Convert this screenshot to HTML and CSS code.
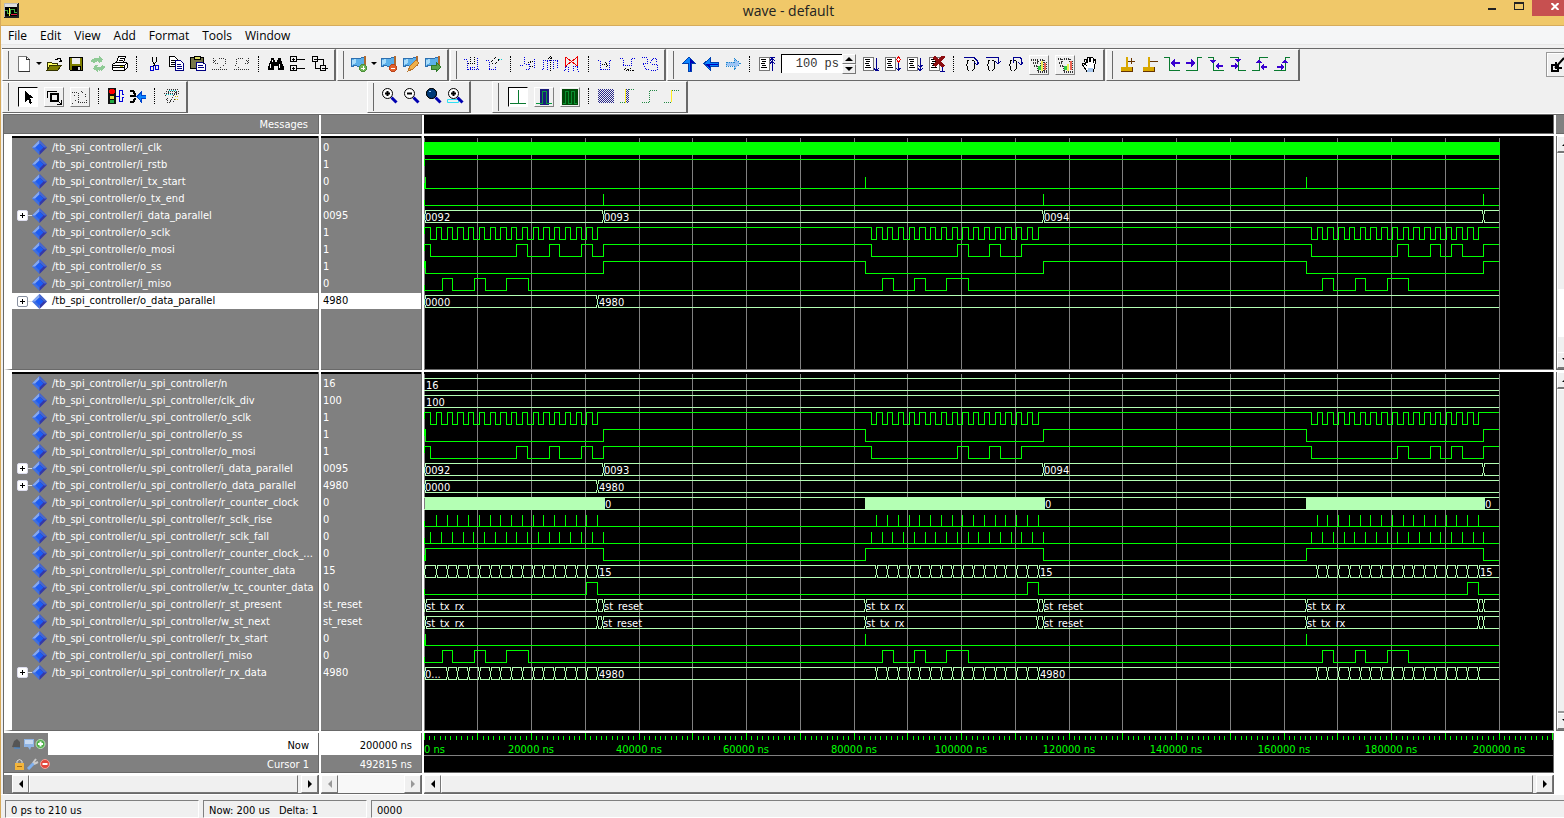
FILE: index.html
```html
<!DOCTYPE html>
<html lang="en">
<head>
<meta charset="utf-8">
<title>wave - default</title>
<link rel="stylesheet" href="styles.css">
</head>
<body>
<svg class="defs" aria-hidden="true">
  <defs>
    <symbol id="flag" viewBox="0 0 16 16"><path d="M0 3l5-1 2 1 6-2v9l-6 1-2-2-5 2z" fill="#5bb0ea" stroke="#2d6fb0"/><path d="M1 4l4-1v4l-4 2z" fill="#a9dcfa" stroke="none"/><path d="M13.500 0v10" stroke="#b06a30" stroke-width="2"/></symbol>
    <symbol id="list" viewBox="0 0 16 16"><path d="M.5 1.500h10v13H.5z" fill="#fff" stroke="#777"/><path d="M2 3.500h5M3 5.500h4M2 7.500h4M3 9.500h4M2 11.500h6" stroke="#000"/></symbol>
    <symbol id="gem" viewBox="0 0 15 15"><path d="M7.500 0L0 7.500 7.500 15z" fill="#3f6fe0"/><path d="M7.500 0L15 7.500 7.500 15z" fill="#3438a8"/><path d="M7.500 0L0 7.500h3l4.500-4z" fill="#86a8f0"/><path d="M7.500 0L15 7.500h-3l-4.500-4z" fill="#4668d0"/><path d="M7.500 3.500l4 4-4 4-4-4z" fill="#1c5cf4"/></symbol>
    <symbol id="lens" viewBox="0 0 17 17"><circle cx="6.500" cy="6.500" r="5" fill="#fff" stroke="#000"/><path d="M10.500 10.500l5 5" stroke="#0000b0" stroke-width="3"/></symbol>
  </defs>
</svg>

<header class="titlebar">
  <svg class="app-icon" viewBox="0 0 15 15"><path d="M0 0h15v15H0z" fill="#222"/><path d="M1 1h12v12H1z" fill="#000"/><path d="M1 1h12v3H1z" fill="#ddd"/><path d="M1 7.500h2v3h3v-4h4v3h3" fill="none" stroke="#4a4"/><path d="M5.500 5v8" stroke="#ee4"/><path d="M7 11.500h6" stroke="#e02040"/><path d="M0 0v14M0 .5h14" stroke="#bbb"/></svg>
  <h1>wave - default</h1>
  <div class="win-buttons">
    <button class="win min" aria-label="Minimize"><span></span></button>
    <button class="win max" aria-label="Maximize"><span></span></button>
    <button class="win close" aria-label="Close"><svg viewBox="0 0 8 7"><path d="M.5 0l7 7M7.500 0l-7 7" stroke="#fff" stroke-width="2"/></svg></button>
  </div>
</header>

<nav class="menubar">
  <button>File</button><button>Edit</button><button>View</button><button>Add</button><button>Format</button><button>Tools</button><button>Window</button>
</nav>

<div class="toolbars">
  <div class="bar-row">
    <div class="group">
      <button class="tb" aria-label="New"><svg viewBox="0 0 16 16"><path d="M2.500.5h8l3 3v12h-11z" fill="#fff" stroke="#777"/><path d="M10.500.5v3h3M14 15.500H3" stroke="#333"/></svg></button>
      <button class="drop" aria-label="New options"></button>
      <button class="tb" aria-label="Open"><svg viewBox="0 0 16 16"><path d="M9 3.500h2l1-1h2l1 2v1M13 5.500h3" stroke="#000"/><path d="M1 14V6h4l1 1h5v3" fill="#ff6" stroke="#330"/><path d="M1 14l3-4.500h11l-3 4.500z" fill="#808000" stroke="#330"/></svg></button>
      <button class="tb" aria-label="Save"><svg viewBox="0 0 16 16"><path d="M1.500 1.500h13v13h-12l-1-1z" fill="#808000" stroke="#000"/><path d="M4 2h8v6H4z" fill="#efefef"/><path d="M4 10h9v4H4z" fill="#000"/><path d="M10 11h2v3h-2z" fill="#ddd"/></svg></button>
      <button class="tb" aria-label="Reload"><svg viewBox="0 0 16 16"><path d="M1 5l3-3h5V0l4 4-4 3V5H6L4 7zM15 11l-3 3H7v2l-4-4 4-3v2h3l2-2z" fill="#8fca95" stroke="#8fca95" stroke-dasharray="1 1"/></svg></button>
      <button class="tb" aria-label="Print"><svg viewBox="0 0 16 16"><path d="M4.500 7l2-6.500h7l-2 6.500" fill="#fff" stroke="#000"/><path d="M8 2.500h4M7 4.500h4" stroke="#000"/><path d="M.5 8.500l3-2h11l1 1v4l-3 3H2l-1.500-1z" fill="#fff" stroke="#000"/><path d="M1 9.500h11l3-2M1 11.500h11M12.500 9v5" stroke="#000"/><path d="M8 10.500h3" stroke="#cc0"/></svg></button>
      <i class="sep"></i>
      <button class="tb" aria-label="Cut"><svg viewBox="0 0 16 16"><path d="M6.500 1v4l3 6M10.500 1v4l-4 6" stroke="#000"/><path d="M4.500 10.500h3v4h-3zM9.500 9.500h3v4h-3z" stroke="#0000d0"/></svg></button>
      <button class="tb" aria-label="Copy"><svg viewBox="0 0 16 16"><path d="M1.500.5h5l3 3v7h-8z" fill="#fff" stroke="#000"/><path d="M3 4.500h4M3 6.500h4M3 8.500h4" stroke="#000"/><path d="M7.500 4.500h5l3 3v7h-8z" fill="#fff" stroke="#000080"/><path d="M9 8.500h4M9 10.500h5M9 12.500h5" stroke="#000080"/></svg></button>
      <button class="tb" aria-label="Paste"><svg viewBox="0 0 16 16"><path d="M.5 1.500h13v11H.5z" fill="#77774a" stroke="#000"/><path d="M4 .5h6v3H4z" fill="#dd6" stroke="#000"/><path d="M6.500 6.500h6l3 2v6h-9z" fill="#fff" stroke="#000080"/><path d="M8 9.500h5M8 11.500h6" stroke="#000080"/></svg></button>
      <button class="tb" aria-label="Undo"><svg class="dots" viewBox="0 0 16 16"><path d="M1.500 2v5h5M2 6l3-3M7 2.500h5M13.500 3v5M12 9.500h-2M9 11.500h-2M0 13.500h16"/></svg></button>
      <button class="tb" aria-label="Redo"><svg class="dots" viewBox="0 0 16 16"><path d="M14.500 2v5h-5M14 6l-3-3M9 2.500H4M2.500 3v5M1 9.500h2M4 11.500h2M0 13.500h16"/></svg></button>
      <i class="sep"></i>
      <button class="tb" aria-label="Find"><svg viewBox="0 0 16 16"><path d="M3 2h3v2h1v2h2V4h1V2h3v2l3 7v3h-6v-4H6v4H0v-3l3-7z" fill="#000"/><path d="M2.500 8v4M11.500 8v4M4.500 4v2" stroke="#fff"/></svg></button>
      <button class="tb" aria-label="Expand all"><svg viewBox="0 0 16 16"><path d="M.5.5h6v5h-6zM.5 9.500h6v5h-6zM2 3.500h3M3.500 2v3M2 12.500h3M3.500 11v3M7 3.500h8M7 12.500h8" stroke="#000"/></svg></button>
      <button class="tb" aria-label="Collapse all"><svg viewBox="0 0 16 16"><path d="M.5.500h5v5h-5zM8.500 9.500h5v5h-5zM2 3.500h3M10 12.500h3M6 3.500h5.500V9M3.500 6v6.500H8M14 12.500h2" stroke="#000"/></svg></button>
    </div>
    <div class="group">
      <button class="tb" aria-label="Add bookmark"><svg viewBox="0 0 16 16"><use href="#flag"/><circle cx="12" cy="12" r="3.500" fill="#6fb356" stroke="#4b8f38"/><path d="M10 12h4M12 10v4" stroke="#fff"/></svg></button>
      <button class="drop" aria-label="Bookmark options"></button>
      <button class="tb" aria-label="Delete bookmark"><svg viewBox="0 0 16 16"><use href="#flag"/><circle cx="12" cy="12" r="3.500" fill="#e2602c" stroke="#b9441c"/><path d="M10 12h4" stroke="#fff"/></svg></button>
      <button class="tb" aria-label="Edit bookmark"><svg viewBox="0 0 16 16"><use href="#flag"/><path d="M5 15l2-5 6-6 3 3-6 6z" fill="#efb04a" stroke="#b9752a"/></svg></button>
      <button class="tb" aria-label="Go to bookmark"><svg viewBox="0 0 16 16"><use href="#flag"/><path d="M6 9h5V6l5 5-5 5v-3H6z" fill="#58a44a" stroke="#2f7a2a"/></svg></button>
    </div>
    <div class="group">
      <button class="tb" aria-label="Insert pulse"><svg class="dots blue" viewBox="0 0 16 16"><path d="M0 3.500h3v10h13M13.500 2v11M6 13v-2h6"/><path class="k" d="M6.500 1v8M10.500 1v8M4 7.500h8"/></svg></button>
      <button class="tb" aria-label="Delete edge"><svg class="dots blue" viewBox="0 0 16 16"><path d="M0 4.500h3v9h6v-4"/><path class="k" d="M5 6l5-5 3 3-5 5z"/><path d="M13 3.500h3" stroke="#0cc"/></svg></button>
      <i class="sep"></i>
      <button class="tb" aria-label="Invert"><svg class="dots blue" viewBox="0 0 16 16"><path d="M4.500 1v7h5v5h-5M0 9.500h4M14.500 3v10"/><path class="k" d="M8 7l5-2M10 10h4"/></svg></button>
      <button class="tb" aria-label="Mirror"><svg class="dots blue" viewBox="0 0 16 16"><path d="M0 13.500h1v-9h4v9M11.500 13v-9h4v9M5 4.500h6"/><path class="k" d="M8.500 0v16M6 3l2-2 3 2"/></svg></button>
      <button class="tb" aria-label="Value"><svg viewBox="0 0 16 16"><path d="M1.500 1v9l12-9v9l-12-9" stroke="#e00"/><path d="M0 14.500h1v-4h3v5M9.500 15v-5h4v5h2" stroke="#00d" stroke-dasharray="1 1"/></svg></button>
      <i class="sep"></i>
      <button class="tb" aria-label="Stretch edge"><svg class="dots blue" viewBox="0 0 16 16"><path d="M0 4.500h2v9h9v-9h3"/><path class="k" d="M4 8.500h5M7 6l3 3-3 2"/></svg></button>
      <button class="tb" aria-label="Move edge"><svg class="dots blue" viewBox="0 0 16 16"><path d="M0 2.500h3v7h8v-7h4"/><path class="k" d="M4 14l2-2 2 2 3-2 2 2H5"/></svg></button>
      <button class="tb" aria-label="Extend waves"><svg class="dots blue" viewBox="0 0 16 16"><path d="M0 1.500h5v6H1l3 6h3M8 7l3-5h3v4M10 8h5v6h-6"/></svg></button>
    </div>
    <div class="group">
      <button class="tb" aria-label="Up"><svg viewBox="0 0 16 16"><path d="M8 1l6 6h-4v8H7V7H2z" fill="#0a84ff" stroke="#0040b0"/><path d="M8.500 2l5 5h-4v8h-1z" fill="#0000b8"/></svg></button>
      <button class="tb" aria-label="Back"><svg viewBox="0 0 16 16"><path d="M1 7.500L7 2v4h8v4H7v4z" fill="#0a84ff" stroke="#0040b0"/><path d="M2 8l5 5V9h8V8z" fill="#0000b8"/></svg></button>
      <button class="tb" aria-label="Forward"><svg class="dots" viewBox="0 0 16 16"><path d="M15 7.500L9 2v4H1v4h8v4z" fill="#9cc4f4" stroke="#28c"/></svg></button>
      <i class="sep"></i>
      <button class="tb" aria-label="Restart"><svg viewBox="0 0 16 16"><use href="#list"/><path d="M11 1.500h5M13.500 1v14M11 5l2-3 3 3M11 8l2-3 3 3" stroke="#000090"/></svg></button>
      <input class="run-length" type="text" value="100 ps" aria-label="Run length">
      <div class="spin"><button class="up" aria-label="Increase"></button><button class="down" aria-label="Decrease"></button></div>
      <button class="tb" aria-label="Run"><svg viewBox="0 0 16 16"><use href="#list"/><path d="M13.500 2v13M11 12l2 3 3-3M12 14.500h4" stroke="#000090"/></svg></button>
      <button class="tb" aria-label="Continue run"><svg viewBox="0 0 16 16"><use href="#list"/><path d="M13.500 6v9M11 12l2 2 3-2" stroke="#000090"/><path d="M13.500 1l2 2.500-2 2.500-2-2.500z" fill="#fff" stroke="#e00"/></svg></button>
      <button class="tb" aria-label="Run all"><svg viewBox="0 0 16 16"><use href="#list"/><path d="M13.500 2v13M11 9l2 2 3-2M11 12l2 3 3-3" stroke="#000090"/></svg></button>
      <button class="tb" aria-label="Break"><svg viewBox="0 0 16 16"><use href="#list"/><path d="M5 1l10 10M15 0L5 10" stroke="#8c0d10" stroke-width="3"/><path d="M11 15.500h5M13.500 11v4" stroke="#000090"/></svg></button>
      <i class="sep"></i>
      <button class="tb" aria-label="Step into"><svg viewBox="0 0 16 16"><path class="brace" d="M6 4H5L4 5v3L3 9l1 1v3l1 1h1M9 4h1l1 1v3l1 1-1 1v3l-1 1H9"/><path d="M1 1.500h10l3 3v4M11 6l3 3 2-3" stroke="#000090"/></svg></button>
      <button class="tb" aria-label="Step over"><svg viewBox="0 0 16 16"><path class="brace" d="M5 4H4L3 5v3L2 9l1 1v3l1 1h1M7 4h1l1 1v3l1 1-1 1v3l-1 1H7"/><path d="M1 1.500h12v6M10 5l3 3 3-3" stroke="#000090"/></svg></button>
      <button class="tb" aria-label="Step out"><svg viewBox="0 0 16 16"><path class="brace" d="M5 4H4L3 5v3L2 9l1 1v3l1 1h1M7 4h1l1 1v3l1 1-1 1v3l-1 1H7"/><path d="M6.500 7V2l2-1h4l2 2v5M11 6l3 3 2-3" stroke="#000090"/></svg></button>
      <button class="tb raised" aria-label="Profile on"><svg viewBox="0 0 16 16"><path d="M0 2.500h7v3H1M9 2.500h4v12M3 8.500h4v6h9M10 6v8M15.500 5v10" stroke="#333" stroke-width="2" stroke-dasharray="1 1"/><path d="M7 9h3v4H7z" fill="#3c4"/><path d="M10 4h2v10h-2z" fill="#ee5"/><path d="M13 6h2v7h-2z" fill="#e65"/></svg></button>
      <button class="tb raised" aria-label="Memory profile"><svg viewBox="0 0 16 16"><path d="M1 2h4v4H2M7 2h6v3M3 8.500h4v6h9M15.500 4v10" stroke="#333" stroke-width="2" stroke-dasharray="1 1"/><path d="M7 9h3v4H7z" fill="#3c4"/><path d="M10 7h2v7h-2z" fill="#ee5"/><path d="M13 4h2v9h-2z" fill="#e65"/></svg></button>
      <button class="tb" aria-label="Pan"><svg viewBox="0 0 16 16"><path d="M5 14l-4-6 1-1 3 2-2-6 2 0 1 4V1h2l1 5 1-5 2 1v5l2-4 1 1-2 9-1 3H6z" fill="#fff" stroke="#000"/><path d="M7 12h5v4H6z" fill="#a8c8ee"/></svg></button>
    </div>
    <div class="group last">
      <button class="tb" aria-label="Insert cursor"><svg viewBox="0 0 16 16"><path d="M7 1v10M2 12h10v2H2z" fill="#fe4" stroke="#d9a800" stroke-width="2"/><path d="M1 15.500h12M12.500 11v4M8 5.500h7M11.500 2v6" stroke="#630"/></svg></button>
      <button class="tb" aria-label="Delete cursor"><svg viewBox="0 0 16 16"><path d="M7 1v10M2 12h10v2H2z" fill="#fe4" stroke="#d9a800" stroke-width="2"/><path d="M1 15.500h12M12.500 11v4M8 5.500h8" stroke="#630"/></svg></button>
      <button class="tb" aria-label="Previous transition"><svg class="edge" viewBox="0 0 16 16"><path d="M0 1.500h5v13h11"/><path class="a" d="M6 7l5-4v3h5v2h-5v3z"/></svg></button>
      <button class="tb" aria-label="Next transition"><svg class="edge" viewBox="0 0 16 16"><path d="M0 14.500h11v-13h5"/><path class="a" d="M10 7L5 3v3H0v2h5v3z"/></svg></button>
      <button class="tb" aria-label="Previous falling edge"><svg class="edge" viewBox="0 0 16 16"><path d="M0 1.500h5v13h11"/><path class="a" d="M7 10l4-3v2h4v2h-4v2zM5 8L2 4h6z"/></svg></button>
      <button class="tb" aria-label="Next falling edge"><svg class="edge" viewBox="0 0 16 16"><path d="M0 1.500h8v13h8"/><path class="a" d="M8 10L5 7v2H1v2h4v2zM8 7L5 3h6z"/></svg></button>
      <button class="tb" aria-label="Previous rising edge"><svg class="edge" viewBox="0 0 16 16"><path d="M0 14.500h7v-13h9"/><path class="a" d="M8 11l4-3v2h3v2h-3v2zM7 3l3 4H4z"/></svg></button>
      <button class="tb" aria-label="Next rising edge"><svg class="edge" viewBox="0 0 16 16"><path d="M0 14.500h11v-13h5"/><path class="a" d="M10 11L7 8v2H3v2h4v2zM11 3l3 4H8z"/></svg></button>
    </div>
    <button class="dock" aria-label="Undock"><svg viewBox="0 0 16 16"><path d="M2 8h6v6H2z" fill="none" stroke="#000" stroke-width="2"/><path d="M14 1L5 11M6 5v6h6" fill="none" stroke="#000" stroke-width="2"/></svg></button>
  </div>

  <div class="bar-row">
    <div class="group modes">
      <button class="tb raised on" aria-label="Select"><svg viewBox="0 0 16 16"><path d="M5 2v11l3-3 2 5 2-1-2-5h4z" fill="#000"/></svg></button>
      <button class="tb raised" aria-label="Zoom mode"><svg viewBox="0 0 16 16"><path d="M1.500 9v-7h9" stroke="#000"/><path d="M5 5h7v7H5z" stroke="#000" stroke-width="2"/><path d="M11 11l4 4v-4M11 15h4" stroke="#000"/></svg></button>
      <button class="tb raised" aria-label="Edit mode"><svg class="dots" viewBox="0 0 16 16"><path d="M0 3.500h6v10h8v-4M2 6h2M9 2l3 3M13 5v3M3 11h2M0 14.500h2"/></svg></button>
      <i class="sep"></i>
      <button class="tb" aria-label="Stop drawing"><svg viewBox="0 0 16 16"><path d="M0 0h8v16H0z" fill="#111"/><circle cx="4" cy="3.500" r="3" fill="#f00"/><path d="M2 8h4v3H2z" fill="#dd4"/><path d="M2 12h4v3H2z" fill="#2a4"/><path d="M8 8.500h3V2.500h3M11.500 8.500v5h3M14.500 2v4h2M14.500 13v-4h2" stroke="#00d"/></svg></button>
      <button class="tb" aria-label="Combine"><svg viewBox="0 0 16 16"><path d="M0 3h3l2 3v1M0 8h6M0 14h3l2-3v-1" stroke="#000" stroke-width="2"/><path d="M7 8.500l4-4v3h5v3h-5v3z" fill="#0a84ff" stroke="#04c"/></svg></button>
      <i class="sep"></i>
      <button class="tb" aria-label="Show drivers"><svg class="dots" viewBox="0 0 16 16"><path d="M3 1.500h12M2 3.500h13M0 5.500h15M1 8l4-4M5 15l8-12M2 12l3-3M9 14l4-8M3 15v-4"/><path d="M5 2.500h8M2 6.500h7" stroke="#0cc"/><path d="M11 8.500h4M11 11.500h4" stroke="#cb0"/></svg></button>
    </div>
    <div class="group zooms">
      <button class="tb" aria-label="Zoom in"><svg class="lens" viewBox="0 0 17 17"><use href="#lens"/><path d="M4 6.500h5M6.500 4v5" stroke="#000" stroke-width="2"/></svg></button>
      <button class="tb" aria-label="Zoom out"><svg class="lens" viewBox="0 0 17 17"><use href="#lens"/><path d="M4 6.500h5" stroke="#000" stroke-width="2"/></svg></button>
      <button class="tb" aria-label="Zoom full"><svg class="lens" viewBox="0 0 17 17"><use href="#lens"/><circle cx="6.500" cy="6.500" r="5" fill="#003a78" stroke="#000"/><path d="M4 4.500h2" stroke="#9cf"/></svg></button>
      <button class="tb" aria-label="Zoom on cursor"><svg class="lens" viewBox="0 0 17 17"><path d="M.5 12.500h11v3H.5z" fill="none" stroke="#2de0f4"/><use href="#lens"/><path d="M4 6.500h5M6.500 4v5" stroke="#000" stroke-width="2"/></svg></button>
    </div>
    <div class="group modes">
      <button class="tb raised on" aria-label="Normal display"><svg viewBox="0 0 16 16"><path d="M0 14.500h16M8.500 1v13" stroke="#0a7a30"/></svg></button>
      <button class="tb raised" aria-label="Expanded display"><svg viewBox="0 0 16 16"><path d="M4 0h9v16H4z" fill="#1a1a7a"/><path d="M0 14.500h6v-12h4v12h6" stroke="#0a9a40"/></svg></button>
      <button class="tb raised" aria-label="All expanded"><svg viewBox="0 0 16 16"><path d="M0 0h16v16H0z" fill="#004a08"/><path d="M1 14.500h2v-12h3v12h3v-12h3v12h3" stroke="#0a9030"/></svg></button>
      <i class="sep"></i>
      <button class="tb" aria-label="Expand time"><svg viewBox="0 0 16 16"><path class="hatch" d="M0 1.500h16M0 3.500h16M0 5.500h16M0 7.500h16M0 9.500h16M0 11.500h16M0 13.500h16"/><path class="hatch" d="M1 2.500h15M1 4.500h15M1 6.500h15M1 8.500h15M1 10.500h15M1 12.500h15M1 14.500h15"/></svg></button>
      <button class="tb" aria-label="Expand at cursor"><svg viewBox="0 0 16 16"><path d="M0 14.500h6M8.500 1.500h6" stroke="#284" stroke-dasharray="1 1"/><path d="M5.500 1v14" stroke="#fe2"/><path class="hatch" d="M6.500 1v14M7.500 2v13M8.500 1v14"/></svg></button>
      <button class="tb" aria-label="Collapse time"><svg viewBox="0 0 16 16"><path d="M0 14.500h7.500v-12h7" stroke="#284" stroke-dasharray="1 1"/></svg></button>
      <button class="tb" aria-label="Collapse at cursor"><svg viewBox="0 0 16 16"><path d="M0 14.500h7.500v-12h7" stroke="#284" stroke-dasharray="1 1"/><path d="M7.500 2v12" stroke="#fe2"/></svg></button>
    </div>
  </div>
</div>

<main class="wave-window">
  <div class="cell head messages">Messages</div>
  <div class="cell head"></div>
  <div class="cell head dark"></div>
  <div class="head rail"></div>

  <div class="cell names" id="names-top"></div>
  <div class="cell values" id="values-top"></div>
  <div class="cell plot"><svg class="wave" id="wave-top" role="img" aria-label="Test bench waveforms"></svg></div>
  <div class="rail vbar"><button class="arrow up" aria-label="Scroll up"></button><div class="vthumb"></div><div class="vgap"></div><button class="arrow down" aria-label="Scroll down"></button></div>

  <div class="cell names" id="names-main"></div>
  <div class="cell values" id="values-main"></div>
  <div class="cell plot"><svg class="wave" id="wave-main" role="img" aria-label="SPI controller waveforms"></svg></div>
  <div class="rail vbar"><button class="arrow up" aria-label="Scroll up"></button><div class="vthumb full"></div><button class="arrow down" aria-label="Scroll down"></button></div>

  <div class="cell cursors">
    <div class="now"><span class="tools"><svg viewBox="0 0 34 12"><path d="M0 9l2-6 3-2 3 3v6z" fill="#555"/><path d="M2 10h6" stroke="#3a8ae0"/><path d="M12 1h10v8h-3l-1 3-2-3h-4z" fill="#8fb4e4"/><path d="M13 3h8M13 5h8" stroke="#fff"/><circle cx="28.500" cy="6" r="4.500" fill="#4fae4a" stroke="#bfe4bd"/><path d="M26 6h5M28.500 3.500v5" stroke="#fff" stroke-width="2"/></svg></span><span class="label">Now</span></div>
    <div class="cur"><span class="tools"><svg viewBox="0 0 38 12"><path d="M5 5V3q2.500-3 5 0v2" fill="none" stroke="#ddd"/><path d="M3 5h9v7H3z" fill="#f3b53c"/><path d="M5 8.500h5" stroke="#a86a10"/><path d="M16 11l6-6" stroke="#7fb0ee" stroke-width="3"/><path d="M21 5l3-4M22 6l4-2" stroke="#ccc" stroke-width="2"/><circle cx="33" cy="6" r="4.500" fill="#e2483c" stroke="#f4a29a"/><path d="M30.500 6h5" stroke="#fff" stroke-width="2"/></svg></span><span class="label">Cursor 1</span></div>
  </div>
  <div class="cell cursors">
    <div class="now value"><span class="label">200000 ns</span></div>
    <div class="cur value"><span class="label">492815 ns</span></div>
  </div>
  <div class="cell plot"><svg class="wave" id="ruler" role="img" aria-label="Time ruler"></svg></div>
  <div class="rail blank"></div>

  <div class="cell hbar first"><button class="arrow left" aria-label="Scroll names left"></button><div class="thumb"></div><button class="arrow right" aria-label="Scroll names right"></button></div>
  <div class="cell hbar"><button class="arrow left" disabled aria-label="Scroll values left"></button><div class="trough"></div><button class="arrow right" disabled aria-label="Scroll values right"></button></div>
  <div class="cell hbar"><button class="arrow left" aria-label="Scroll time left"></button><div class="thumb"></div><button class="arrow right" aria-label="Scroll time right"></button></div>
  <div class="rail"></div>
</main>

<footer class="status">
  <div class="field range">0 ps to 210 us</div>
  <div class="field time"><span>Now: 200 us</span><span>Delta: 1</span></div>
  <div class="field rest">0000</div>
</footer>
<script src="waves.js"></script>
</body>
</html>
```

FILE: styles.css
```css
* { box-sizing: border-box; }
html, body { height: 100%; margin: 0; }
body {
  display: flex;
  flex-direction: column;
  overflow: hidden;
  background: #f0f0f0;
  border-left: 1px solid #d6a95a;
  font: 11px/17px "DejaVu Sans Condensed", "DejaVu Sans", sans-serif;
  color: #000;
}
button { margin: 0; padding: 0; border: 0; background: none; font: inherit; color: inherit; }
.defs { position: absolute; width: 0; height: 0; }

/* title bar */
.titlebar {
  flex: none;
  display: grid;
  grid-template-columns: 1fr auto 1fr;
  height: 26px;
  margin-left: -1px;
  background: #f0c869;
  border-bottom: 1px solid #d6ac5c;
}
.app-icon { width: 15px; height: 15px; margin: 3px 0 0 4px; shape-rendering: crispEdges; }
.titlebar h1 { margin: 0; padding-left: 13px; font: 14px/22px "Open Sans", "Noto Sans", sans-serif; color: #222; }
.win-buttons { display: flex; justify-content: flex-end; height: 16px; }
.win { display: flex; justify-content: center; width: 27px; }
.win span { display: block; }
.min span { width: 8px; height: 2px; margin-top: 8px; background: #222; }
.max span { width: 10px; height: 8px; margin-top: 2px; border: 1px solid #222; border-top-width: 2px; }
.close { width: 32px; padding-left: 14px; background: #c75050; }
.close svg { width: 8px; height: 7px; margin-top: 3px; }

/* menu */
.menubar {
  flex: none;
  display: flex;
  gap: 13px;
  height: 19px;
  padding-left: 7px;
  background: #f5f6f7;
  border-bottom: 1px solid #e8e8e8;
  font: 12px/20px "Open Sans", "Noto Sans", sans-serif;
}

/* tool bars */
.toolbars { flex: none; margin: 3px 0 0 1px; border-top: 1px solid #696969; border-bottom: 1px solid #fff; }
.bar-row { display: flex; height: 32px; }
.group {
  display: flex;
  align-items: center;
  margin-right: 1px;
  padding: 0 3px 3px;
  border: solid;
  border-width: 1px 2px 1px 1px;
  border-color: #fff #696969 #696969 #fff;
}
.group::before { content: ""; width: 2px; height: 28px; margin: 2px 4px 0 0; border-right: 1px solid #696969; }
.group.last { padding-right: 5px; }
.modes::before { margin-right: 6px; }
.zooms { margin-left: 178px; margin-right: 21px; }
.tb { display: flex; flex: none; align-items: center; justify-content: center; width: 22px; height: 22px; }
.tb svg { width: 16px; height: 16px; fill: none; shape-rendering: crispEdges; }
.tb svg.lens { width: 17px; height: 17px; shape-rendering: auto; }
.raised { width: 20px; height: 20px; margin: 3px 3px 0; border: 1px solid; border-color: #fff #808080 #808080 #fff; }
.raised.on { background: #fff; border-color: #000 #fff #fff #000; }
.drop { flex: none; width: 8px; height: 22px; }
.drop::before, .spin button::before, .arrow::before { content: ""; display: block; width: 0; height: 0; margin: auto; border: solid transparent; }
.drop::before { border-width: 3px 3px 0; border-top-color: #000; }
.sep { width: 0; height: 16px; margin: 0 6px 0 5px; border-left: 1px dotted #000; }
.dots { stroke: #333; stroke-dasharray: 1 1; }
.blue { stroke: #0000e0; }
.blue .k { stroke: #000; }
.brace { stroke: #000; }
.edge { stroke: #0a7a30; }
.edge .a { fill: #3a00d0; stroke: none; }
.hatch { stroke: #26268a; stroke-dasharray: 1 1; }
.run-length {
  width: 61px;
  height: 19px;
  margin-left: 3px;
  padding: 1px 3px;
  border: solid;
  border-width: 1px 0 0 1px;
  border-color: #000;
  background: #fff;
  color: #333;
  font: 12px "Liberation Mono", monospace;
  text-align: right;
}
.spin { display: flex; flex-direction: column; width: 14px; margin-right: 4px; }
.spin button { width: 14px; height: 10px; border: 1px solid; border-color: #fff #777 #777 #fff; }
.spin .up::before { border-width: 0 4px 4px; border-bottom-color: #000; }
.spin .down::before { border-width: 4px 4px 0; border-top-color: #000; }
.dock { width: 20px; height: 25px; margin: 3px -2px 0 auto; border: 1px solid #999; border-right: 0; box-shadow: inset 1px 1px #fff; }
.dock svg { width: 16px; height: 16px; margin: 4px 0 0 3px; }

/* wave window */
.wave-window {
  flex: 1;
  min-height: 0;
  display: grid;
  grid-template-columns: 317px 103px minmax(0, 1fr) 8px;
  grid-template-rows: 21px 236px minmax(0, 1fr) 42px 19px;
  margin-left: 2px;
  border: solid #696969;
  border-width: 1px 0 0 1px;
  background: #fff;
}
.cell { min-width: 0; margin: 0 2px 2px 0; border: solid #696969; border-width: 0 1px 1px 0; background: #808080; overflow: hidden; }
.head { color: #fff; }
.head.rail { margin-bottom: 2px; border-bottom: 1px solid #696969; background: #808080; }
.head.dark, .plot { background: #000; }
.messages { padding-right: 10px; line-height: 19px; text-align: right; }
.names { border-left: 8px solid #fff; }
.names, .values { color: #fff; }
.names::before, .values::before { content: ""; display: block; height: 2px; background: #000; }
.row { display: flex; align-items: center; height: 17px; padding-left: 20px; white-space: nowrap; }
.names .row:nth-child(1), .values .row:nth-child(1) { margin-top: 1px; }
.row svg { flex: none; width: 15px; height: 15px; margin-right: 5px; }
.row.bus { padding-left: 5px; }
.plus { display: block; flex: none; width: 11px; height: 11px; border: 1px solid #dde; border-radius: 2px; background: linear-gradient(#000, #000) center / 5px 1px no-repeat, linear-gradient(#000, #000) center / 1px 5px no-repeat, #fff; }
.row.selected .plus { border-color: #8890a0; }
.row .link { flex: none; width: 4px; height: 1px; background: #ddd; }
.values .row { padding-left: 2px; }
.row.selected { border-top: 1px solid #808080; background: #fff; color: #000; line-height: 16px; }
.wave { display: block; width: 100%; height: 100%; shape-rendering: crispEdges; }
.wave .grid { stroke: #808080; fill: none; }
.wave .bit { stroke: #00ff00; fill: none; }
.wave .bus { stroke: #b4ffb4; fill: none; }
.wave .busy { fill: #b4ffb4; }
.wave .solid { fill: #00ff00; }
.wave text { fill: #fff; }
.wave .tick { fill: #00ff00; text-anchor: middle; }
.wave .tick.origin { text-anchor: start; }

.cursors { display: flex; flex-direction: column; }
.now, .cur { display: flex; justify-content: space-between; align-items: center; height: 22px; padding-right: 9px; background: #fff; }
.cur { height: 17px; background: none; color: #fff; }
.cursors .label { padding-top: 2px; }
.cursors .value { justify-content: flex-end; }
.tools { display: flex; align-items: center; width: 44px; height: 100%; padding-left: 8px; background: #808080; }
.now svg { width: 34px; height: 12px; }
.cur svg { flex: none; width: 38px; height: 12px; }

/* scroll bars */
.hbar { display: flex; margin-bottom: 0; background: #f0f0f0; }
.hbar.first { border-left: 8px solid #808080; }
.arrow { display: flex; flex: none; width: 17px; border: 1px solid; border-color: #fff #777 #777 #fff; background: #f0f0f0; }
.left::before { border-width: 4px 4px 4px 0; border-right-color: #000; }
.right::before { border-width: 4px 0 4px 4px; border-left-color: #000; }
.left:disabled::before { border-right-color: #999; }
.right:disabled::before { border-left-color: #999; }
.thumb { flex: 1; margin-right: 3px; border: 1px solid; border-color: #fff #777 #777 #fff; background: #f0f0f0; }
.trough { flex: 1; background: #f8f8f8; }
.rail { min-width: 0; overflow: hidden; }
.vbar { display: flex; flex-direction: column; margin-bottom: 2px; border-left: 1px solid #696969; border-bottom: 1px solid #696969; }
.vbar .arrow { width: 17px; height: 17px; border-bottom-width: 2px; }
.vbar .up::before { border-width: 0 4px 4px; border-bottom-color: #000; }
.vbar .down::before { border-width: 4px 4px 0; border-top-color: #000; }
.vthumb { flex: 1; margin: 1px 0 0 1px; background: #f0f0f0; }
.vgap { height: 15px; margin-bottom: 48px; box-shadow: 1px 48px #f0f0f0; }
.vthumb.full { border-bottom: 2px solid #999; }
.blank { margin-bottom: 2px; background: #fff; }

/* status bar */
.status { flex: none; display: flex; gap: 4px; height: 24px; padding: 5px 0 0 4px; border-top: 1px solid #fff; }
.field { flex: none; padding-left: 5px; border: 1px solid; border-color: #808080 #fff #fff #808080; line-height: 19px; }
.range { width: 194px; }
.time { display: flex; gap: 9px; width: 164px; }
.rest { flex: 1; border-right: 0; }
```

FILE: waves.js
```js
const SVG_NS = 'http://www.w3.org/2000/svg';
const END = 1075;          // x of 200000 ns
const STEP = 10.75;        // width of 2000 ns
const ROW = 17;
const TOP = 6;
const HEIGHT = 12;

// One SPI transfer: start, end, first falling and first rising clock edge.
const transfers = [
  { start: 1, end: 179, fall: 6.9, rise: 12.25 },
  { start: 441, end: 619, fall: 447.3, rise: 452.9 },
  { start: 882, end: 1059, fall: 887.8, rise: 893.1 }
];
const fall = (t, i) => (i === 16 ? t.end : Math.floor(t.fall + STEP * i));
const rise = (t, i) => Math.floor(t.rise + STEP * i);
const late = (t, i) => Math.floor(t.fall + 0.4 + STEP * i);
const range = n => Array.from({ length: n }, (_, i) => i);
const [t1, t2, t3] = transfers;

// Toggle lists: x positions at which a bit changes its level.
const sclk = transfers.flatMap(t => range(16).flatMap(i => [fall(t, i), rise(t, i)]));
const ss = transfers.flatMap(t => [t.start, t.end]);
const miso = transfers.flatMap(t => [1, 2, 4, 5, 7, 9].map(i => late(t, i)));
const mosi = [
  ...[0, 8, 9, 11, 12, 14, 15, 16].map(i => fall(t1, i)),
  ...[0, 8, 9, 11, 12, 14].map(i => fall(t2, i)),
  ...[0, 8, 9, 11, 12, 13, 14, 16].map(i => fall(t3, i))
];
const lastBit = transfers.flatMap(t => [rise(t, 14), rise(t, 15)]);
const starts = transfers.map(t => t.start);

const inData = { bus: [0, t1.end, t2.end, t3.end], text: [[1, '0092'], [t1.end + 1, '0093'], [t2.end + 1, '0094']] };
const outData = { bus: [0, rise(t1, 15)], text: [[1, '0000'], [rise(t1, 15) + 2, '4980']] };
const steps = skip => transfers.flatMap((t, n) => range(16).filter(i => n || i >= skip).map(i => rise(t, i)));
const states = shift => ({
  bus: [1, 173, 179 - shift, 441, 614 - shift, 619, 882, 1054, 1059],
  text: [[2, 'st_tx_rx'], [180 - shift, 'st_reset'], [442, 'st_tx_rx'], [620, 'st_reset'], [883, 'st_tx_rx']]
});

const U = '/tb_spi_controller/u_spi_controller/';
const T = '/tb_spi_controller/';

const topSignals = [
  { name: T + 'i_clk', value: '0', solid: true },
  { name: T + 'i_rstb', value: '1', level: 1, toggles: [] },
  { name: T + 'i_tx_start', value: '0', pulses: starts },
  { name: T + 'o_tx_end', value: '0', pulses: transfers.map(t => t.end) },
  { name: T + 'i_data_parallel', value: '0095', expand: true, ...inData },
  { name: T + 'o_sclk', value: '1', level: 1, toggles: sclk },
  { name: T + 'o_mosi', value: '1', level: 1, toggles: mosi },
  { name: T + 'o_ss', value: '1', level: 1, toggles: ss },
  { name: T + 'i_miso', value: '0', level: 0, toggles: miso },
  { name: T + 'o_data_parallel', value: '4980', expand: true, selected: true, ...outData }
];

const mainSignals = [
  { name: U + 'n', value: '16', bus: [], text: [[2, '16']] },
  { name: U + 'clk_div', value: '100', bus: [], text: [[2, '100']] },
  { name: U + 'o_sclk', value: '1', level: 1, toggles: sclk },
  { name: U + 'o_ss', value: '1', level: 1, toggles: ss },
  { name: U + 'o_mosi', value: '1', level: 1, toggles: mosi },
  { name: U + 'i_data_parallel', value: '0095', expand: true, ...inData },
  { name: U + 'o_data_parallel', value: '4980', expand: true, ...outData },
  { name: U + 'r_counter_clock', value: '0', bus: [], busy: transfers.map(t => [t.start, t.end + 2]), text: transfers.map(t => [t.end + 2, '0']) },
  { name: U + 'r_sclk_rise', value: '0', pulses: transfers.flatMap(t => range(16).map(i => rise(t, i))) },
  { name: U + 'r_sclk_fall', value: '0', pulses: transfers.flatMap(t => range(17).map(i => fall(t, i))) },
  { name: U + 'r_counter_clock_...', value: '0', level: 0, toggles: ss },
  { name: U + 'r_counter_data', value: '15', bus: [0, ...steps(0)], text: transfers.map(t => [rise(t, 15) + 2, '15']) },
  { name: U + 'w_tc_counter_data', value: '0', level: 0, toggles: lastBit },
  { name: U + 'r_st_present', value: 'st_reset', ...states(0) },
  { name: U + 'w_st_next', value: 'st_reset', ...states(1) },
  { name: U + 'r_tx_start', value: '0', pulses: starts },
  { name: U + 'i_miso', value: '0', level: 0, toggles: miso },
  { name: U + 'r_rx_data', value: '4980', expand: true, bus: [0, ...steps(1)], text: [[1, '0...'], [175, '4980'], [616, '4980']] }
];

function add(parent, tag, attrs, content) {
  const node = document.createElementNS(SVG_NS, tag);
  for (const key in attrs) node.setAttribute(key, attrs[key]);
  if (content) node.textContent = content;
  parent.append(node);
  return node;
}

function drawBit(svg, s, hi, lo) {
  let y = s.level ? hi : lo;
  let d = `M.5 ${(hi + lo) / 2}V${y}`;
  for (const x of s.toggles) {
    const next = y === hi ? lo : hi;
    d += `H${x + 0.5}V${next}`;
    y = next;
  }
  add(svg, 'path', { class: 'bit', d: d + `H${END}` });
}

function drawPulses(svg, s, hi, lo) {
  const d = s.pulses.map(x => `M${x + 0.5} ${hi}V${lo}`).join('');
  add(svg, 'path', { class: 'bit', d: `M.5 ${(hi + lo) / 2}V${lo}H${END}${d}` });
}

function drawBus(svg, s, hi, lo) {
  let d = '';
  let from = 0;
  for (const x of s.bus) {
    d += `M${from} ${hi}H${x - 0.5}v3M${from} ${lo}H${x - 0.5}v-3M${x + 0.5} ${hi + 3}V${lo - 3}M${x + 1.5} ${hi}v3M${x + 1.5} ${lo}v-3`;
    from = x + 1;
  }
  d += `M${from} ${hi}H${END}M${from} ${lo}H${END}`;
  add(svg, 'path', { class: 'bus', d });
  for (const [a, b] of s.busy || []) {
    add(svg, 'rect', { class: 'busy', x: a, y: hi - 0.5, width: b - a, height: HEIGHT + 1 });
  }
  for (const [x, label] of s.text) {
    const box = add(svg, 'svg', { x, y: hi + 0.5, width: 60, height: HEIGHT - 1 });
    add(box, 'text', { x: 0, y: 10 }, label);
  }
}

function drawPane(id, signals) {
  const svg = document.getElementById('wave-' + id);
  const names = document.getElementById('names-' + id);
  const values = document.getElementById('values-' + id);
  for (const k of range(21)) {
    add(svg, 'path', { class: 'grid', d: `M${Math.floor(53.75 * k) + 0.5} 2V600` });
  }
  signals.forEach((s, i) => {
    const hi = TOP + ROW * i + 0.5;
    const lo = hi + HEIGHT;
    if (s.solid) add(svg, 'rect', { class: 'solid', x: 0, y: hi - 0.5, width: END + 1, height: HEIGHT + 1 });
    else if (s.bus) drawBus(svg, s, hi, lo);
    else if (s.pulses) drawPulses(svg, s, hi, lo);
    else drawBit(svg, s, hi, lo);

    const mark = s.selected ? ' selected' : '';
    const plus = s.expand ? '<button class="plus" aria-label="Expand"></button><i class="link"></i>' : '';
    names.insertAdjacentHTML('beforeend', `<div class="row${mark}${s.expand ? ' bus' : ''}">${plus}<svg viewBox="0 0 15 15"><use href="#gem"/></svg><span class="name">${s.name}</span></div>`);
    values.insertAdjacentHTML('beforeend', `<div class="row${mark}">${s.value}</div>`);
  });
}

function drawRuler() {
  const svg = document.getElementById('ruler');
  let d = '';
  for (const k of range(420)) {
    d += `M${Math.floor(5.375 * k) + 0.5} ${k % 10 ? 3 : 0}V7`;
  }
  add(svg, 'path', { class: 'bit', d });
  add(svg, 'path', { class: 'grid', d: 'M0 22.500H4000' });
  for (const k of range(11)) {
    add(svg, 'text', { class: k ? 'tick' : 'tick origin', x: Math.floor(107.5 * k), y: 20 }, `${k * 20000} ns`);
  }
}

drawPane('top', topSignals);
drawPane('main', mainSignals);
drawRuler();
```
